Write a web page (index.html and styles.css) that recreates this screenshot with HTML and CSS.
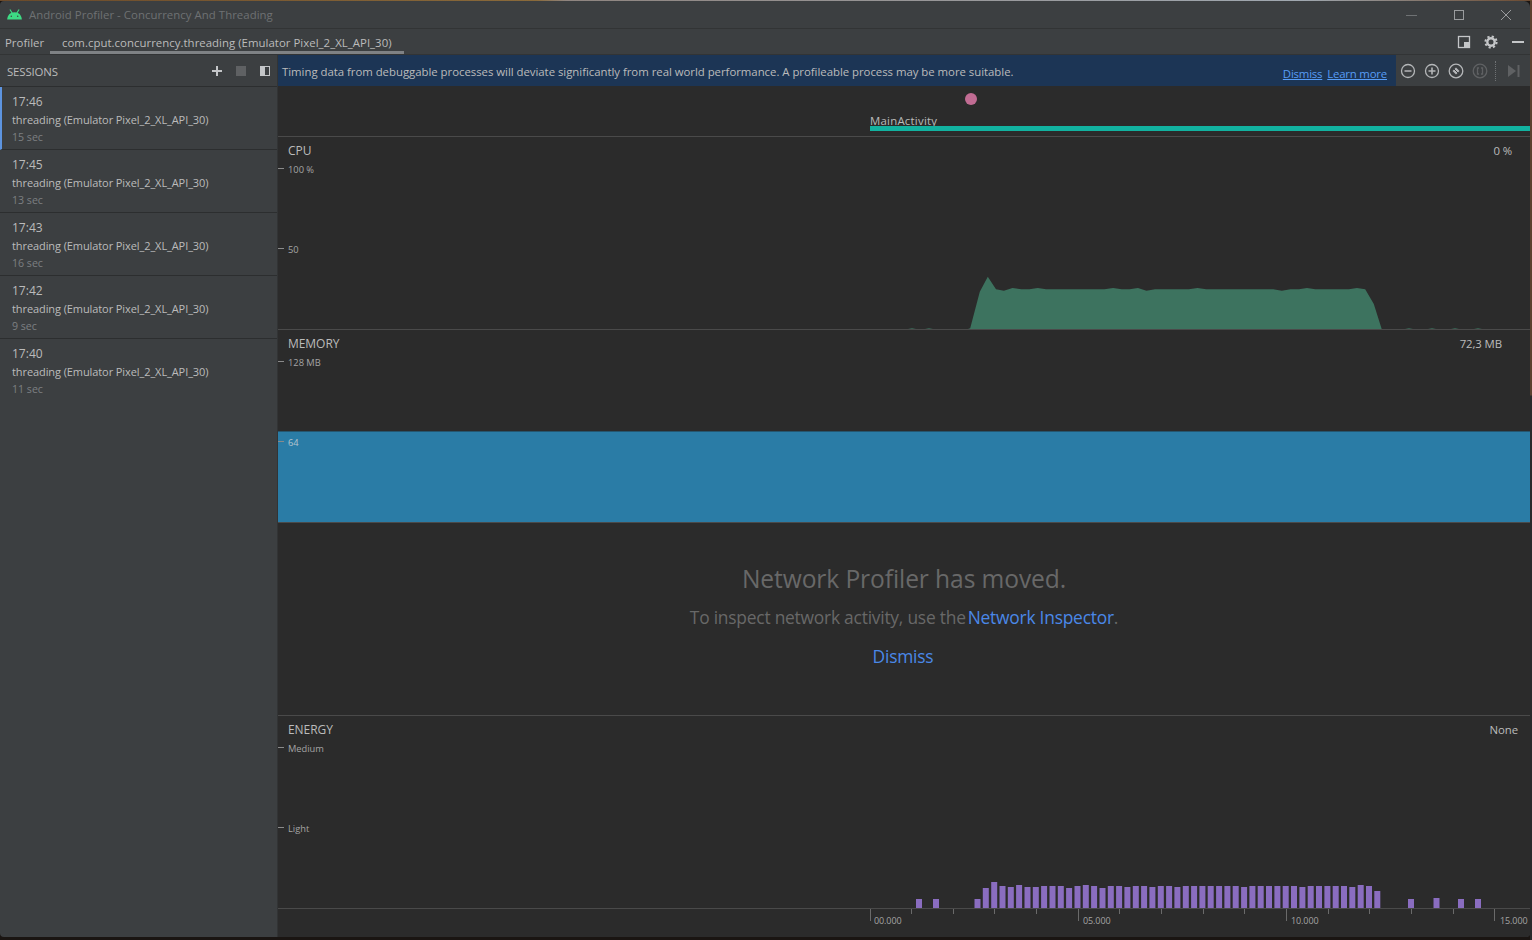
FILE: index.html
```html
<!DOCTYPE html>
<html>
<head>
  <title>Android Profiler - Concurrency And Threading</title>
  <meta charset="UTF-8">
  <link rel="stylesheet" href="styles.css">
</head>
<body>
  <div id="window">
    <div class="titlebar">
      <svg class="android" width="17" height="11" viewBox="0 0 18 12"><path d="M1 11.500C1.300 7 4 3.500 9 3.500s7.700 3.500 8 8z" fill="#3ddc84"/><path d="M4 .5l2.500 4M14 .5l-2.500 4" stroke="#3ddc84" stroke-width="1.200"/><circle cx="5.500" cy="8" r=".8" fill="#3c3f41"/><circle cx="12.500" cy="8" r=".8" fill="#3c3f41"/></svg>
      <span class="title">Android Profiler - Concurrency And Threading</span>
      <div class="winbtns">
        <svg width="14" height="14" viewBox="0 0 14 14"><path d="M1 7.500h11" stroke="#6f7274"/></svg>
        <svg width="14" height="14" viewBox="0 0 14 14"><rect x="2.500" y="2.500" width="9" height="9" fill="none" stroke="#9a9c9e"/></svg>
        <svg width="14" height="14" viewBox="0 0 14 14"><path d="M2 2l10 10M12 2L2 12" stroke="#9a9c9e"/></svg>
      </div>
    </div>

    <div class="tabbar">
      <span class="tool-name">Profiler</span>
      <div class="tab">com.cput.concurrency.threading (Emulator Pixel_2_XL_API_30)</div>
      <div class="tab-icons">
        <svg width="14" height="14" viewBox="0 0 14 14"><rect x="1.500" y="1.500" width="11" height="11" fill="none" stroke="#c4c6c8" stroke-width="1.300"/><rect x="7" y="7" width="6" height="6" fill="#c4c6c8"/></svg>
        <svg width="14" height="14" viewBox="0 0 14 14"><circle cx="7" cy="7" r="3.700" fill="none" stroke="#c4c6c8" stroke-width="2.400"/><circle cx="7" cy="7" r="5.600" fill="none" stroke="#c4c6c8" stroke-width="2" stroke-dasharray="2.200 2.200"/></svg>
        <svg width="14" height="14" viewBox="0 0 14 14"><path d="M1 7h12" stroke="#c4c6c8" stroke-width="2"/></svg>
      </div>
    </div>

    <div class="content">
      <div class="sessions">
        <div class="sessions-head">
          <span>SESSIONS</span>
          <div class="sessions-icons">
            <svg width="12" height="12" viewBox="0 0 12 12"><path d="M6 1v10M1 6h10" stroke="#c4c6c8" stroke-width="2"/></svg>
            <svg width="12" height="12" viewBox="0 0 12 12"><rect x="1" y="1" width="10" height="10" fill="#5f6163"/></svg>
            <svg width="12" height="12" viewBox="0 0 12 12"><rect x="1.500" y="1.500" width="9" height="9" fill="none" stroke="#c4c6c8"/><rect x="1" y="1" width="5" height="10" fill="#c4c6c8"/></svg>
          </div>
        </div>
        <div class="session active">
          <div class="session-time">17:46</div>
          <div class="session-name">threading (Emulator Pixel_2_XL_API_30)</div>
          <div class="session-len">15 sec</div>
        </div>
        <div class="session">
          <div class="session-time">17:45</div>
          <div class="session-name">threading (Emulator Pixel_2_XL_API_30)</div>
          <div class="session-len">13 sec</div>
        </div>
        <div class="session">
          <div class="session-time">17:43</div>
          <div class="session-name">threading (Emulator Pixel_2_XL_API_30)</div>
          <div class="session-len">16 sec</div>
        </div>
        <div class="session">
          <div class="session-time">17:42</div>
          <div class="session-name">threading (Emulator Pixel_2_XL_API_30)</div>
          <div class="session-len">9 sec</div>
        </div>
        <div class="session last">
          <div class="session-time">17:40</div>
          <div class="session-name">threading (Emulator Pixel_2_XL_API_30)</div>
          <div class="session-len">11 sec</div>
        </div>
      </div>

      <div class="main">
        <div class="topstrip">
          <div class="banner">
            <span class="banner-text">Timing data from debuggable processes will deviate significantly from real world performance. A profileable process may be more suitable.</span>
            <a class="banner-link">Dismiss</a>
            <a class="banner-link">Learn more</a>
          </div>
          <div class="toolbar">
            <svg width="16" height="16" viewBox="0 0 16 16"><circle cx="8" cy="8" r="6.500" fill="none" stroke="#b4b6b8" stroke-width="1.300"/><path d="M4.500 8h7" stroke="#b4b6b8" stroke-width="1.600"/></svg>
            <svg width="16" height="16" viewBox="0 0 16 16"><circle cx="8" cy="8" r="6.500" fill="none" stroke="#b4b6b8" stroke-width="1.300"/><path d="M4.500 8h7M8 4.500v7" stroke="#b4b6b8" stroke-width="1.600"/></svg>
            <svg width="16" height="16" viewBox="0 0 16 16"><circle cx="8" cy="8" r="6.800" fill="none" stroke="#b4b6b8" stroke-width="1.300"/><path d="M8 4.500l3.500 3.500-3.500 3.500-3.500-3.500z" fill="#b4b6b8"/><path d="M5 5l6 6" stroke="#3c3f41"/></svg>
            <svg width="16" height="16" viewBox="0 0 16 16"><circle cx="8" cy="8" r="6.800" fill="none" stroke="#5f6163" stroke-width="1.300"/><path d="M7 5H5.500v6H7M9 5h1.500v6H9" fill="none" stroke="#5f6163" stroke-width="1.300"/></svg>
            <span class="toolbar-sep"></span>
            <svg width="14" height="14" viewBox="0 0 14 14"><path d="M1 1l8 6-8 6z" fill="#5f6163"/><rect x="10.500" y="1" width="2" height="12" fill="#5f6163"/></svg>
          </div>
        </div>

        <div class="events">
          <span class="event-dot"></span>
          <span class="activity-name">MainActivity</span>
          <span class="activity-bar"></span>
        </div>

        <div class="lane cpu">
          <svg class="lane-chart" width="1252" height="192" viewBox="278 137 1252 192">
            <path fill="#3d735f" d="M908 329l4-.7 4 .7M925 329l4-.7 4 .7M1405 329l4-.7 4 .7M1428 329l4-.7 4 .7M1451 329l4-.7 4 .7M1474 329l4-.7 4 .7z"/>
            <path fill="#3d735f" d="M968 329L970.200 328.300 979.800 291.700 987.800 276.700 996 289.300 1003.900 290.700 1012.500 288 1021.200 289.300 1029.400 289.300 1037.700 288 1046 289.300 1104.500 289.300 1113.100 288 1121.700 289.300 1129.600 289.300 1137.900 288 1146.500 290.700 1155.100 289.300 1188.900 289.300 1197.500 288 1206.100 289.300 1273.200 289.300 1281.800 290.700 1290.500 289.300 1299 289.300 1307 288 1315.200 289.300 1349 289.300 1356.900 288 1365.200 289.300 1373.800 304 1381.700 329z"/>
          </svg>
          <div class="lane-head"><span>CPU</span><span class="lane-value value-cpu">0 %</span></div>
          <div class="axis-label">100 %</div>
          <div class="axis-label">50</div>
        </div>

        <div class="lane memory">
          <div class="memory-band"></div>
          <div class="lane-head"><span>MEMORY</span><span class="lane-value value-mem">72,3 MB</span></div>
          <div class="axis-label">128 MB</div>
          <div class="axis-label on-band">64</div>
        </div>

        <div class="network">
          <div class="network-title">Network Profiler has moved.</div>
          <div class="network-sub">To inspect network activity, use the<a class="network-link">Network Inspector</a>.</div>
          <a class="network-dismiss">Dismiss</a>
        </div>

        <div class="lane energy">
          <svg id="energy-bars" class="lane-chart" width="1252" height="192" viewBox="278 716 1252 192"></svg>
          <div class="lane-head"><span>ENERGY</span><span class="lane-value value-energy">None</span></div>
          <div class="axis-label">Medium</div>
          <div class="axis-label">Light</div>
        </div>

        <div class="timeline">
          <svg id="timeline-ticks" class="lane-chart" width="1252" height="28" viewBox="278 909 1252 28"></svg>
          <span class="time-label t0">00.000</span>
          <span class="time-label t5">05.000</span>
          <span class="time-label t10">10.000</span>
          <span class="time-label t15">15.000</span>
        </div>
      </div>
    </div>
  </div>

  <script>
    const lone = [[916, 9], [933, 9], [1408, 9], [1433.5, 10], [1458, 9], [1475, 9]];
    const run = [9, 20, 26, 22, 21, 23, 21, 21, 22, 22, 22, 20, 22, 23, 22, 20, 22, 22, 21, 22, 22, 21, 22, 22, 21, 22, 22, 22, 22, 22, 22, 22, 21, 22, 22, 22, 22, 22, 22, 21, 22, 22, 22, 22, 22, 21, 23, 22, 17];

    let bars = "";
    lone.forEach(([x, h]) => {
      bars += `<rect x="${x}" y="${908 - h}" width="6" height="${h}" fill="#8a6dc0"/>`;
    });
    run.forEach((h, i) => {
      const x = 974.5 + i * 8.33;
      bars += `<rect x="${x.toFixed(1)}" y="${908 - h}" width="6" height="${h}" fill="#8a6dc0"/>`;
    });
    document.getElementById("energy-bars").innerHTML = bars;

    let ticks = "";
    for (let i = 0; i <= 15; i++) {
      const x = Math.round(869.5 + i * 41.65) + 0.5;
      const len = i % 5 === 0 ? 12 : 5;
      ticks += `<path d="M${x} 909v${len}" stroke="#6a6a6a"/>`;
    }
    document.getElementById("timeline-ticks").innerHTML = ticks;
  </script>
</body>
</html>
```
FILE: styles.css
```css
* {
  box-sizing: border-box;
}

body {
  margin: 0;
  height: 940px;
  overflow: hidden;
  font-family: "Open Sans", "Noto Sans", sans-serif;
  background:
    linear-gradient(to right, #6b4a2a, #8a6a3a 35%, #8f8580 37%, #a0a8b0 85%, #6b4a30) top / 100% 1px no-repeat,
    linear-gradient(to bottom, #5c4030 395px, #2a2a2c 396px) right / 2px 100% no-repeat,
    #1a1512;
}

a {
  cursor: pointer;
}

#window {
  width: 1530px;
  height: 936px;
  margin-top: 1px;
  display: flex;
  flex-direction: column;
  background-color: #3c3f41;
  border-radius: 4px 6px 4px 4px;
  overflow: hidden;
}

.titlebar {
  height: 28px;
  flex: none;
  display: flex;
  align-items: center;
  padding-left: 6px;
  border-bottom: 1px solid #323435;
}

.android {
  margin-right: 6px;
}

.title {
  font-size: 11.400px;
  letter-spacing: 0.040px;
  color: #6e7173;
}

.winbtns {
  margin-left: auto;
  display: flex;
  gap: 33px;
  padding-right: 17px;
}

.tabbar {
  height: 26px;
  flex: none;
  display: flex;
  align-items: center;
  position: relative;
  border-bottom: 1px solid #323435;
}

.tool-name {
  font-size: 11.400px;
  letter-spacing: 0.020px;
  color: #bbbbbb;
  margin: 1px 0 0 5px;
  width: 45px;
}

.tab {
  width: 354px;
  height: 25px;
  padding: 6px 0 0 12px;
  font-size: 11.400px;
  letter-spacing: 0.030px;
  white-space: nowrap;
  color: #bbbbbb;
  border-bottom: 3px solid #7f8285;
}

.tab-icons {
  margin-left: auto;
  display: flex;
  gap: 13px;
  padding-right: 5px;
}

.content {
  flex: 1;
  display: flex;
  min-height: 0;
}

.sessions {
  width: 278px;
  flex: none;
  border-right: 1px solid #323435;
}

.sessions-head {
  height: 32px;
  display: flex;
  align-items: center;
  justify-content: space-between;
  padding: 1px 6px 0 7px;
  font-size: 11.400px;
  letter-spacing: -0.140px;
  color: #bbbbbb;
  border-bottom: 1px solid #2c2e2f;
}

.sessions-icons {
  display: flex;
  gap: 12px;
}

.session {
  height: 63px;
  padding: 6px 0 0 12px;
  border-bottom: 1px solid #2c2e2f;
}

.session.last {
  border-bottom: none;
}

.session.active {
  border-left: 2px solid #5d94e0;
  padding-left: 10px;
}

.session-time {
  font-size: 12px;
  line-height: 17px;
  color: #bbbbbb;
}

.session-name {
  font-size: 11px;
  letter-spacing: -0.090px;
  line-height: 17px;
  margin-top: 1px;
  white-space: nowrap;
  color: #bbbbbb;
}

.session-len {
  font-size: 10.600px;
  line-height: 17px;
  margin-top: 1px;
  color: #7c7f81;
}

.main {
  flex: 1;
  min-width: 0;
  display: flex;
  flex-direction: column;
  background-color: #2b2b2b;
}

.topstrip {
  height: 31px;
  flex: none;
  display: flex;
  background-color: #3c3f41;
}

.banner {
  width: 1118px;
  display: flex;
  align-items: center;
  padding: 1px 0 0 4px;
  background-color: #1c3555;
  font-size: 11.400px;
  letter-spacing: -0.030px;
  color: #bbbbbb;
}

.banner-text {
  white-space: nowrap;
  margin-right: auto;
}

.banner-link {
  color: #589df6;
  text-decoration: underline;
  letter-spacing: -0.200px;
  margin: 4px 9px 0 -4px;
}

.toolbar {
  flex: 1;
  display: flex;
  align-items: center;
  gap: 8px;
  padding-left: 4px;
}

.toolbar-sep {
  height: 20px;
  border-left: 1px dotted #6f7274;
  margin-left: -1px;
  margin-right: 3px;
}

.events {
  height: 51px;
  flex: none;
  position: relative;
  border-bottom: 1px solid #4a4a4a;
}

.event-dot {
  position: absolute;
  left: 687px;
  top: 7px;
  width: 12px;
  height: 12px;
  border-radius: 50%;
  background-color: #c16c93;
}

.activity-name {
  position: absolute;
  left: 592px;
  top: 27px;
  font-size: 11.400px;
  letter-spacing: 0.240px;
  color: #bbbbbb;
}

.activity-bar {
  position: absolute;
  left: 592px;
  right: 0;
  top: 40px;
  height: 5px;
  background-color: #12b2a0;
}

.lane {
  position: relative;
  height: 193px;
  flex: none;
  padding-left: 10px;
  border-bottom: 1px solid #4a4a4a;
}

.lane-chart {
  position: absolute;
  left: 0;
  top: 0;
}

.memory-band {
  position: absolute;
  left: 0;
  right: 0;
  top: 101px;
  bottom: 0;
  background-color: #2a7ca6;
  border-top: 1px solid #25566f;
}

.lane-head {
  position: relative;
  height: 25px;
  display: flex;
  justify-content: space-between;
  padding-top: 5px;
  font-size: 12px;
  letter-spacing: -0.050px;
  color: #bbbbbb;
}

.lane-value {
  font-size: 11.400px;
  letter-spacing: -0.100px;
  margin-top: 1px;
}

.value-cpu {
  margin-right: 18px;
}

.value-mem {
  margin-right: 28px;
}

.value-energy {
  margin-right: 12px;
}

.axis-label {
  position: relative;
  height: 16px;
  margin-bottom: 64px;
  font-size: 9.300px;
  line-height: 16px;
  color: #a4a4a4;
}

.axis-label.on-band {
  color: #b4c4ce;
}

.axis-label::before {
  content: "";
  position: absolute;
  left: -10px;
  top: 6px;
  width: 6px;
  height: 1px;
  background-color: #8a8a8a;
}

.network {
  height: 193px;
  flex: none;
  display: flex;
  flex-direction: column;
  align-items: center;
  padding: 39px 0 0 0;
  border-bottom: 1px solid #4a4a4a;
}

.network-title {
  font-size: 24.600px;
  line-height: 34px;
  letter-spacing: -0.100px;
}

.network-title,
.network-sub {
  color: #686868;
}

.network-sub {
  margin-top: 8px;
  font-size: 17.400px;
  line-height: 26px;
  letter-spacing: -0.230px;
}

.network-link {
  color: #4a88e8;
  margin-left: 2px;
}

.network-dismiss {
  margin: 13px 2px 0 0;
  font-size: 17.400px;
  line-height: 26px;
  letter-spacing: -0.210px;
  color: #4a88e8;
}

.energy {
  height: 193px;
  border-bottom: 1px solid #4a4a4a;
}

.timeline {
  position: relative;
  flex: 1;
}

.time-label {
  position: absolute;
  top: 5px;
  font-size: 9px;
  letter-spacing: -0.100px;
  color: #a4a4a4;
}

.t0 { left: 596px; }
.t5 { left: 805px; }
.t10 { left: 1013px; }
.t15 { left: 1222px; }
```
